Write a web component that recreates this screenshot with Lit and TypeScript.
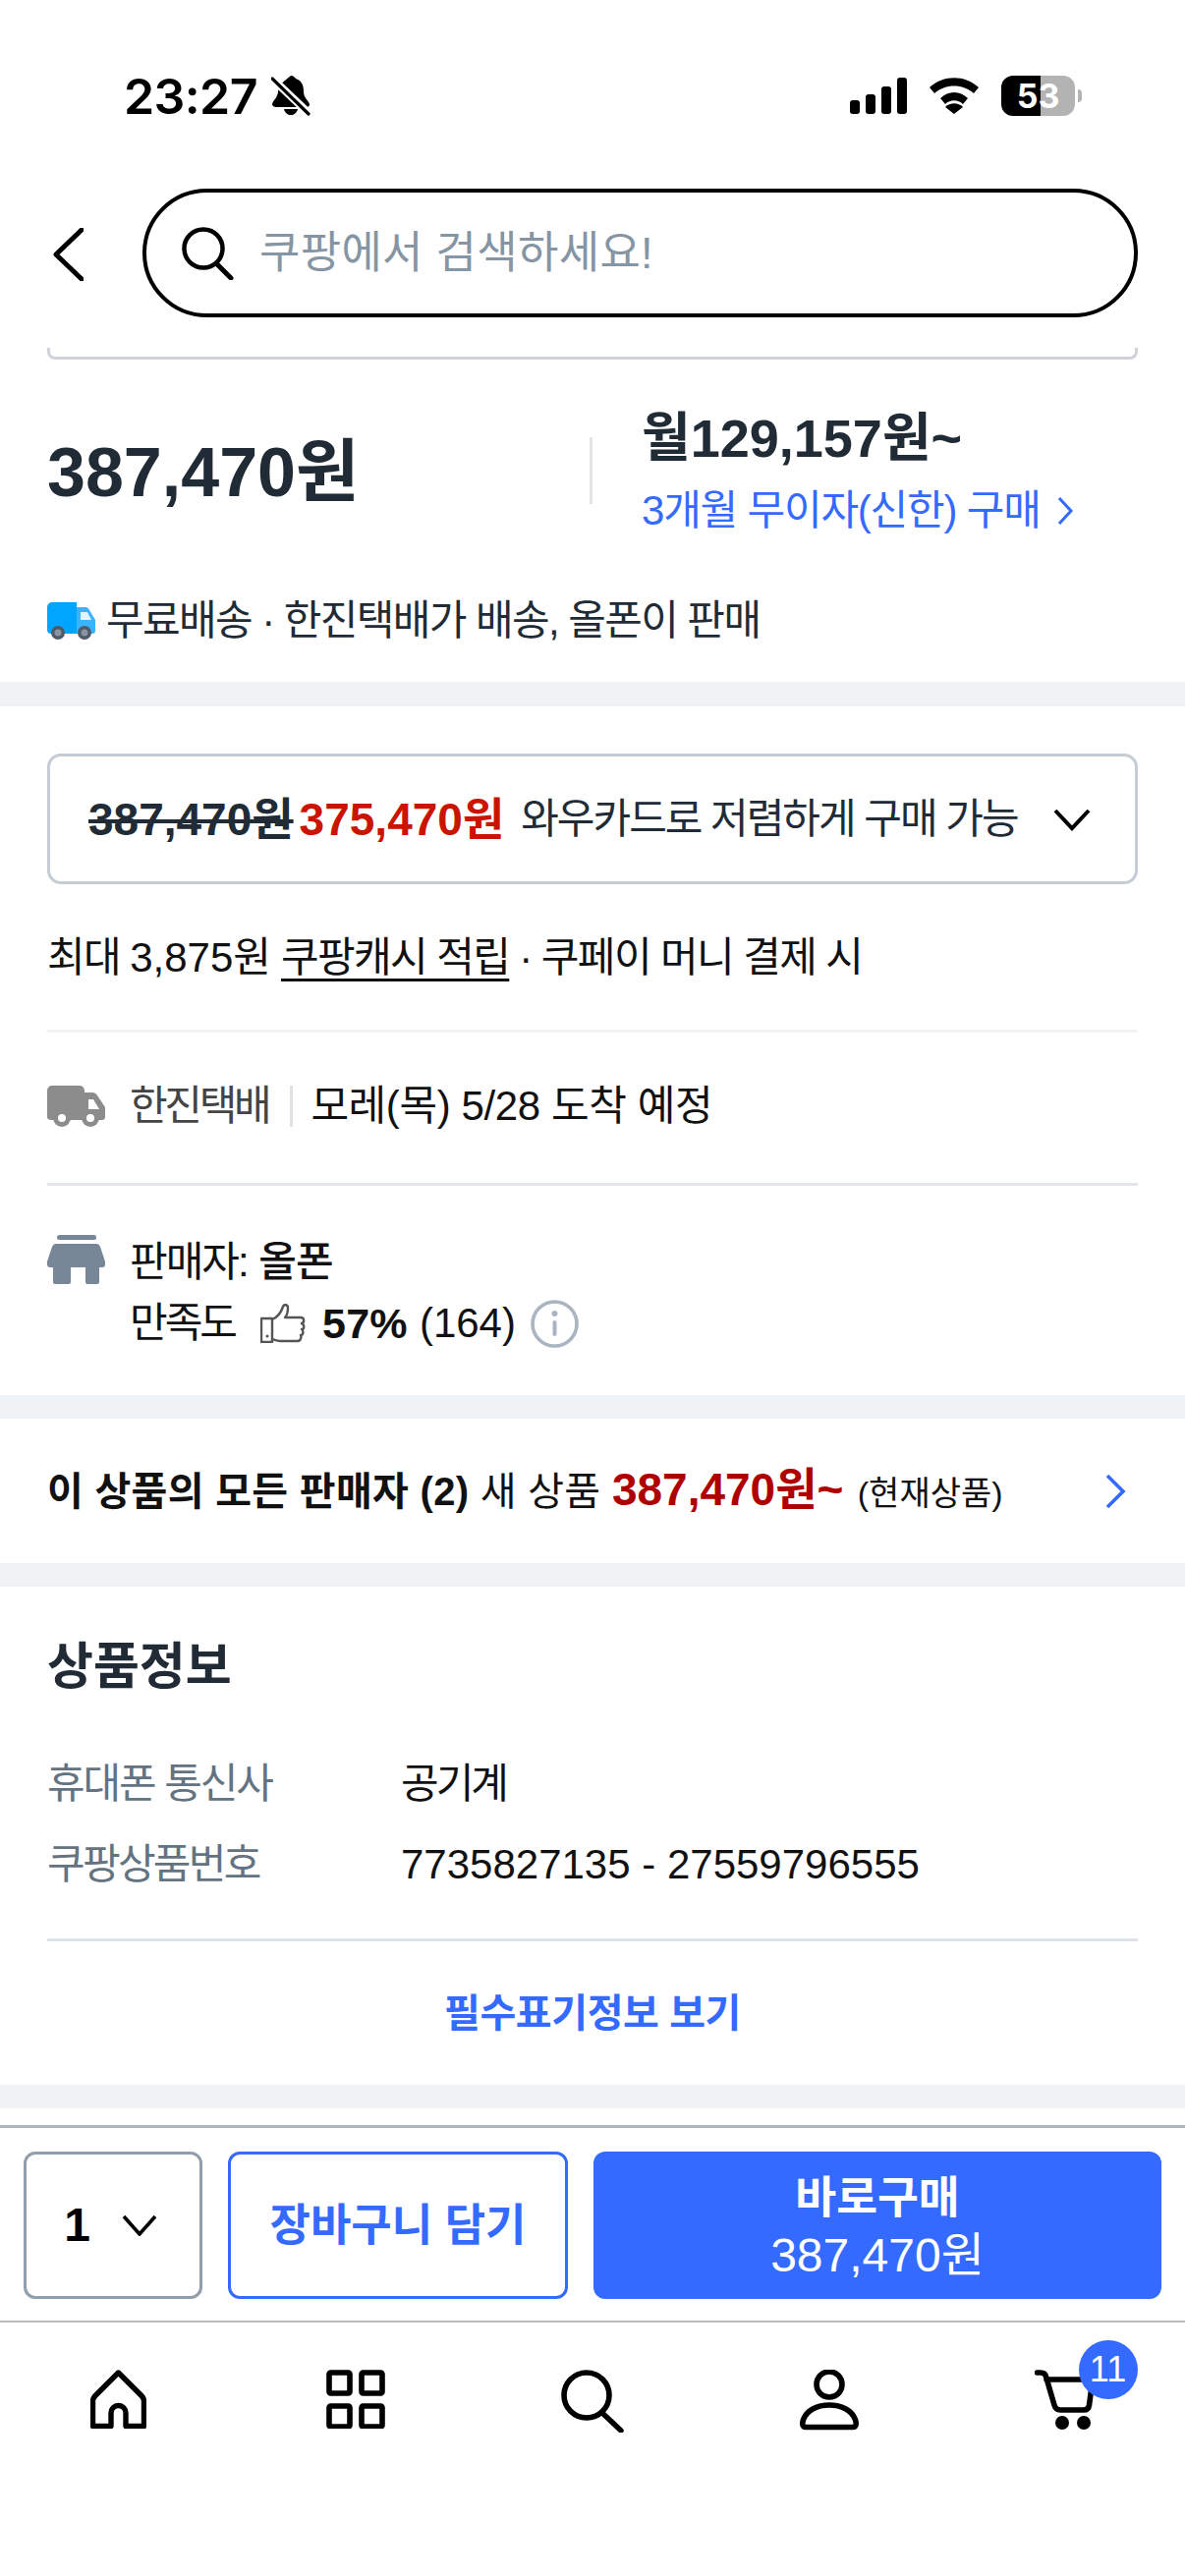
import { LitElement, html, css } from "lit";
import { customElement } from "lit/decorators.js";

@customElement("app-root")
export class AppRoot extends LitElement {
  static styles = css`
    :host {
      display: flex;
      flex-direction: column;
      width: 1206px;
      height: 2622px;
      background: #fff;
      color: #111;
      font-family: "Liberation Sans", "Noto Sans CJK KR", sans-serif;
      font-size: 42px;
      line-height: 56px;
      overflow: hidden;
    }
    svg { display: block; flex: none; }
    .status {
      height: 160px;
      box-sizing: border-box;
      padding: 77px 112px 0 126px;
      display: flex;
      justify-content: space-between;
      align-items: flex-start;
    }
    .status-left { display: flex; align-items: flex-start; gap: 14px; }
    .time {
      font-family: Inter, "Liberation Sans", sans-serif;
      font-weight: 600;
      font-size: 50px;
      line-height: 42px;
      letter-spacing: -0.6px;
      color: #000;
    }
    .status-right { display: flex; align-items: flex-start; gap: 22px; }
    .battery {
      position: relative;
      width: 75px;
      height: 41px;
      border-radius: 12px;
      background: linear-gradient(90deg, #000 53%, #b3b3b3 53%);
      color: #fff;
      font-family: Inter, "Liberation Sans", sans-serif;
      font-weight: 700;
      font-size: 34px;
      line-height: 41px;
      text-align: center;
    }
    .battery::after {
      content: "";
      position: absolute;
      right: -7px;
      top: 14px;
      width: 4px;
      height: 13px;
      border-radius: 0 4px 4px 0;
      background: #b3b3b3;
    }
    .header {
      height: 194px;
      box-sizing: border-box;
      padding: 32px 48px 0 54px;
      display: flex;
      align-items: flex-start;
      gap: 60px;
    }
    .back { margin-top: 40px; }
    .search {
      flex: 1;
      height: 131px;
      box-sizing: border-box;
      border: 4.5px solid #000;
      border-radius: 66px;
      display: flex;
      align-items: center;
      padding-left: 36px;
      gap: 25px;
      font-size: 45px;
      letter-spacing: 0.3px;
      color: #8695a4;
    }
    .card-end {
      height: 12px;
      margin: 0 48px;
      box-sizing: border-box;
      border: 3px solid #cfd3d7;
      border-top: none;
      border-radius: 0 0 8px 8px;
    }
    .price-row {
      margin: 50px 0 0 48px;
      display: flex;
      align-items: center;
    }
    .price-main {
      width: 552px;
      font-size: 70px;
      line-height: 80px;
      font-weight: 700;
      color: #212b36;
      margin-bottom: 2px;
    }
    .vline {
      width: 3px;
      height: 68px;
      background: #e2e4e6;
      margin-bottom: 6px;
    }
    .price-side { margin-left: 50px; }
    .monthly {
      font-size: 54px;
      line-height: 60px;
      font-weight: 700;
      color: #212b36;
    }
    .plan {
      margin-top: 16px;
      display: flex;
      align-items: center;
      gap: 16px;
      color: #346aff;
      letter-spacing: -1.2px;
    }
    .ship {
      margin: 56px 0 0 48px;
      display: flex;
      align-items: center;
      gap: 11px;
      color: #212b36;
      letter-spacing: -1.6px;
    }
    .ship-gap { height: 34px; flex: none; }
    .band { height: 24px; background: #f0f3f6; flex: none; }
    .band.tall { height: 25px; }
    .section-pad { padding: 48px 48px 0; }
    .wow {
      height: 133px;
      box-sizing: border-box;
      border: 3px solid #c4cdd5;
      border-radius: 14px;
      padding: 0 45px 0 39px;
      display: flex;
      align-items: center;
      color: #212b36;
    }
    .strike {
      font-weight: 700;
      font-size: 46px;
      color: #212b36;
      text-decoration: line-through;
      text-decoration-thickness: 4px;
    }
    .red {
      margin-left: 6px;
      font-weight: 700;
      font-size: 46px;
      color: #cb1400;
    }
    .wow-note { margin-left: 17px; flex: 1; letter-spacing: -2px; }
    .cash { margin-top: 47px; letter-spacing: -1.600px; }
    .cash .num { letter-spacing: 0; }
    .cash u {
      text-decoration-thickness: 3px;
      text-underline-offset: 7px;
    }
    .hr-light { border-top: 3px solid #f2f3f4; margin-top: 45px; }
    .hr { border-top: 3px solid #e3e6e9; }
    .delivery {
      display: flex;
      align-items: center;
      padding: 47px 0 50px;
    }
    .carrier { margin-left: 25px; color: #444; letter-spacing: -3.300px; }
    .tiny-line {
      width: 3px;
      height: 42px;
      background: #dfe1e3;
      margin: 0 18px 0 22px;
    }
    .eta { letter-spacing: -0.4px; }
    .seller { padding-top: 47px; padding-bottom: 45px; display: flex; gap: 25px; }
    .seller-lines { display: flex; flex-direction: column; gap: 6px; padding-top: 3px; }
    .seller-line { display: flex; align-items: center; }
    .tight { letter-spacing: -2px; }
    .tighter { letter-spacing: -3px; }
    .medium { font-weight: 500; letter-spacing: -1px; margin-left: 2px; }
    .store { margin-top: 3px; }
    .thumb { margin-left: 26px; }
    .rate { font-weight: 700; margin-left: 15px; font-size: 43px; letter-spacing: 0.3px; }
    .count { margin-left: 12px; }
    .info-i { margin-left: 15px; }
    .sellers {
      height: 147px;
      padding: 0 60px 0 48px;
      display: flex;
      align-items: center;
      font-size: 40px;
    }
    .sellers-text { flex: 1; white-space: nowrap; letter-spacing: 0.300px; }
    .sellers b { font-weight: 700; }
    .dark-red { color: #ae0000; font-weight: 700; font-size: 46px; letter-spacing: 0; }
    .now { font-size: 34px; margin-left: 3px; letter-spacing: 0; }
    .info { padding: 50px 48px 0; }
    .info h2 {
      margin: 0;
      font-size: 51px;
      line-height: 64px;
      font-weight: 700;
      color: #212b36;
    }
    .spec { display: flex; }
    .spec-label { width: 360px; color: #637381; letter-spacing: -2.100px; }
    .spec.second .spec-label { letter-spacing: -2.700px; }
    .spec.first { margin-top: 59px; }
    .spec.second { margin-top: 26px; }
    .carrier-type { letter-spacing: -3px; }
    .info .hr { margin-top: 47px; border-top-color: #dfe3e8; }
    .more {
      height: 146px;
      display: flex;
      align-items: center;
      justify-content: center;
      color: #346aff;
      font-weight: 700;
      font-size: 40px;
      letter-spacing: -0.400px;
    }
    .spacer { flex: 1; }
    .bar {
      border-top: 3px solid #adb5bd;
      padding: 24px 24px 22px 24px;
      display: flex;
      gap: 26px;
    }
    .bar > * {
      height: 150px;
      box-sizing: border-box;
      border-radius: 12px;
      display: flex;
      align-items: center;
      justify-content: center;
    }
    .qty {
      width: 182px;
      border: 3px solid #919eab;
      gap: 32px;
      padding-right: 5px;
      font-size: 48px;
      font-weight: 700;
      color: #000;
    }
    .cart {
      width: 346px;
      border: 3px solid #346aff;
      padding-top: 2px;
      color: #346aff;
      font-size: 45px;
      font-weight: 700;
    }
    .buy {
      flex: 1;
      background: #346aff;
      color: #fff;
      flex-direction: column;
      padding-top: 3px;
      font-size: 48px;
      line-height: 58px;
    }
    .buy b { font-weight: 700; font-size: 45.500px; }
    .nav {
      border-top: 2px solid #bcbcbc;
      height: 260px;
      box-sizing: border-box;
      padding-top: 48px;
      display: grid;
      grid-template-columns: repeat(5, 241px);
      justify-items: center;
      align-items: start;
    }
    .cart-wrap { position: relative; margin-left: -2px; }
    .badge {
      position: absolute;
      left: 45px;
      top: -30px;
      width: 60px;
      height: 60px;
      border-radius: 50%;
      background: #346aff;
      color: #fff;
      font-size: 36px;
      line-height: 60px;
      text-align: center;
    }
    .bell { margin-top: -1px; }
  `;

  render() {
    return html`
      <div class="status">
        <div class="status-left">
          <span class="time">23:27</span>
          <svg class="bell" width="40" height="42" viewBox="0 0 40 42">
            <path d="M20 1c3 0 4 2 5 3 6 2 8 7 8 13 0 7 5 9 6 13 0 2-1 3-3 3H5c-2 0-4-1-4-3 1-4 5-6 6-12 0-3 1-6 2-8z" fill="#000"/>
            <path d="M13 35h14c-1 4-4 6-7 6s-6-2-7-6z" fill="#000"/>
            <path d="M-1 2L40 41" stroke="#fff" stroke-width="8"/>
            <path d="M1 4L38 40" stroke="#000" stroke-width="3.2" stroke-linecap="round"/>
          </svg>
        </div>
        <div class="status-right">
          <svg width="58" height="40" viewBox="0 0 58 40">
            <rect x="0" y="25" width="10" height="14" rx="3"/>
            <rect x="16" y="19" width="10" height="20" rx="3"/>
            <rect x="32" y="11" width="10" height="28" rx="3"/>
            <rect x="48" y="2" width="10" height="37" rx="3"/>
          </svg>
          <svg width="52" height="40" viewBox="0 0 52 40">
            <path d="M1 12C15 -1 37 -1 51 12l-5 6C35 8 17 8 6 18z"/>
            <path d="M12 23c8-8 20-8 28 0l-5 6c-5-5-13-5-18 0z"/>
            <path d="M26 39l-9-7c5-5 13-5 18 0z"/>
          </svg>
          <div class="battery">53</div>
        </div>
      </div>

      <div class="header">
        <svg class="back" width="31" height="54" viewBox="0 0 31 54">
          <path d="M29 2L3 27l26 25" fill="none" stroke="#000" stroke-width="5" stroke-linecap="round" stroke-linejoin="round"/>
        </svg>
        <div class="search">
          <svg width="54" height="54" viewBox="0 0 54 54">
            <circle cx="22" cy="22" r="19.5" fill="none" stroke="#000" stroke-width="4.5"/>
            <path d="M35 37l15 15" stroke="#000" stroke-width="5" stroke-linecap="round"/>
          </svg>
          <span>쿠팡에서 검색하세요!</span>
        </div>
      </div>
      <div class="card-end"></div>

      <div class="price-row">
        <div class="price-main">387,470원</div>
        <div class="vline"></div>
        <div class="price-side">
          <div class="monthly">월129,157원~</div>
          <div class="plan">
            <span>3개월 무이자(신한) 구매</span>
            <svg width="18" height="30" viewBox="0 0 18 30">
              <path d="M3 2l12 13L3 28" fill="none" stroke="#346aff" stroke-width="3"/>
            </svg>
          </div>
        </div>
      </div>

      <div class="ship">
        <svg width="49" height="38" viewBox="0 0 49 38">
          <path d="M0 5a5 5 0 0 1 5-5h25v32H4a4 4 0 0 1-4-4z" fill="#00a5ff"/>
          <path d="M30 5h9c2 0 3 1 4 3l6 10v11c0 2-1 3-3 3H30z" fill="#39b5ff"/>
          <path d="M34 10h7l4 8H34z" fill="#e3f4ff"/>
          <circle cx="11" cy="31" r="7" fill="#4f5a68"/><circle cx="11" cy="31" r="3.5" fill="#8794a3"/>
          <circle cx="38" cy="31" r="7" fill="#4f5a68"/><circle cx="38" cy="31" r="3.5" fill="#8794a3"/>
        </svg>
        <span>무료배송 · 한진택배가 배송, 올폰이 판매</span>
      </div>
      <div class="ship-gap"></div>
      <div class="band tall"></div>

      <div class="section-pad">
        <div class="wow">
          <span class="strike">387,470원</span>
          <span class="red">375,470원</span>
          <span class="wow-note">와우카드로 저렴하게 구매 가능</span>
          <svg width="38" height="24" viewBox="0 0 38 24">
            <path d="M2 3l17 18L36 3" fill="none" stroke="#000" stroke-width="4"/>
          </svg>
        </div>
        <div class="cash">최대 <span class="num">3,875원</span> <u>쿠팡캐시 적립</u> · 쿠페이 머니 결제 시</div>
        <div class="hr-light"></div>
        <div class="delivery">
          <svg width="59" height="42" viewBox="0 0 59 42">
            <path d="M0 5a5 5 0 0 1 5-5h28a5 5 0 0 1 5 5v2h8c2 0 4 1 5 3l8 12v10c0 2-1 3-3 3H4c-2 0-4-1-4-3z" fill="#8c8c8c"/>
            <path d="M42 14h5l6 10H42z" fill="#fff"/>
            <circle cx="15" cy="33" r="9" fill="#8c8c8c"/><circle cx="15" cy="33" r="4" fill="#fff"/>
            <circle cx="44" cy="33" r="9" fill="#8c8c8c"/><circle cx="44" cy="33" r="4" fill="#fff"/>
          </svg>
          <span class="carrier">한진택배</span>
          <div class="tiny-line"></div>
          <span class="eta">모레(목) 5/28 도착 예정</span>
        </div>
        <div class="hr"></div>
        <div class="seller">
          <svg class="store" width="59" height="50" viewBox="0 0 59 50">
            <rect x="10" y="0" width="40" height="5" rx="2.5" fill="#788797"/>
            <path d="M9 9h41c2 0 3 1 4 3l5 15v3c0 2-1 3-3 3H3c-2 0-3-1-3-3v-3l5-15c1-2 2-3 4-3z" fill="#788797"/>
            <path d="M6 33h18v15a2 2 0 0 1-2 2H8a2 2 0 0 1-2-2z" fill="#788797"/>
            <path d="M39 33h14v15a2 2 0 0 1-2 2H41a2 2 0 0 1-2-2z" fill="#788797"/>
          </svg>
          <div class="seller-lines">
            <div class="seller-line"><span class="tight">판매자:&nbsp;</span><span class="medium">올폰</span></div>
            <div class="seller-line">
              <span class="tighter">만족도</span>
              <svg class="thumb" width="48" height="40" viewBox="0 0 48 40">
                <path d="M1 15h11v24H1z M12 16c5-2 9-7 11-13 1-3 5-2 5 1 0 4-1 8-3 10h16c4 0 4 5 1 6 3 1 3 6 0 6 2 1 2 6-1 6 1 2 0 6-3 6H20c-3 0-5-1-8-2" fill="none" stroke="#555" stroke-width="2.4" stroke-linejoin="round"/>
                <circle cx="7" cy="33" r="1.5" fill="#555"/>
              </svg>
              <span class="rate">57%</span>
              <span class="count">(164)</span>
              <svg class="info-i" width="49" height="49" viewBox="0 0 49 49">
                <circle cx="24.5" cy="24.5" r="22.5" fill="none" stroke="#aab5c2" stroke-width="3.6"/>
                <circle cx="24.5" cy="14" r="3" fill="#aab5c2"/>
                <rect x="22.5" y="21" width="4" height="16" rx="2" fill="#aab5c2"/>
              </svg>
            </div>
          </div>
        </div>
      </div>
      <div class="band"></div>

      <div class="sellers">
        <div class="sellers-text"><b>이 상품의 모든 판매자 (2)</b> 새 상품 <span class="dark-red">387,470원~</span> <span class="now">(현재상품)</span></div>
        <svg width="21" height="36" viewBox="0 0 21 36">
          <path d="M2 2l16 16L2 34" fill="none" stroke="#346aff" stroke-width="3.6"/>
        </svg>
      </div>
      <div class="band"></div>

      <div class="info">
        <h2>상품정보</h2>
        <div class="spec first"><span class="spec-label">휴대폰 통신사</span><span class="carrier-type">공기계</span></div>
        <div class="spec second"><span class="spec-label">쿠팡상품번호</span><span>7735827135 - 27559796555</span></div>
        <div class="hr"></div>
        <div class="more">필수표기정보 보기</div>
      </div>
      <div class="band"></div>
      <div class="spacer"></div>

      <div class="bar">
        <div class="qty">
          <span>1</span>
          <svg width="36" height="22" viewBox="0 0 36 22">
            <path d="M2 2l16 18L34 2" fill="none" stroke="#000" stroke-width="3.6"/>
          </svg>
        </div>
        <div class="cart">장바구니 담기</div>
        <div class="buy"><b>바로구매</b><span>387,470원</span></div>
      </div>

      <div class="nav">
        <svg width="57" height="60" viewBox="0 0 57 60">
          <path d="M28.500 3L52 26.500q2.500 2.500 2.500 5V57.500H36V44a7.500 7.500 0 0 0-15 0V57.500H2.500V31.500q0-2.500 2.500-5z" fill="none" stroke="#000" stroke-width="5.400" stroke-linejoin="round"/>
        </svg>
        <svg width="60" height="60" viewBox="0 0 60 60">
          <rect x="3" y="3" width="21" height="21" rx="1.500" fill="none" stroke="#000" stroke-width="5.600"/>
          <rect x="36" y="3" width="21" height="21" rx="1.500" fill="none" stroke="#000" stroke-width="5.600"/>
          <rect x="3" y="37" width="21" height="21" rx="1.500" fill="none" stroke="#000" stroke-width="5.600"/>
          <rect x="36" y="37" width="21" height="21" rx="1.500" fill="none" stroke="#000" stroke-width="5.600"/>
        </svg>
        <svg width="64" height="64" viewBox="0 0 64 64">
          <circle cx="26" cy="26" r="23" fill="none" stroke="#000" stroke-width="5.600"/>
          <path d="M43 45l18 17" stroke="#000" stroke-width="5.400" stroke-linecap="round"/>
        </svg>
        <svg width="60" height="62" viewBox="0 0 60 62">
          <ellipse cx="30" cy="15" rx="13" ry="13" fill="none" stroke="#000" stroke-width="5.600"/>
          <path d="M6 58.500C2 58.500 2.500 54 3.500 51 7 41 18 36 30 36s23 5 26.500 15c1 3 1.500 7.500-2.500 7.500z" fill="none" stroke="#000" stroke-width="5.600" stroke-linejoin="round"/>
        </svg>
        <div class="cart-wrap">
          <svg width="62" height="62" viewBox="0 0 62 62">
            <path d="M2.500 3H6c3 0 5 1.500 5.500 4L20 36c1 3.500 3 5 6 5h24c3 0 5-1.500 5.500-5L59 10H12" fill="none" stroke="#000" stroke-width="5.600" stroke-linecap="round" stroke-linejoin="round"/>
            <circle cx="28" cy="54" r="7" fill="#000"/>
            <circle cx="50" cy="54" r="7" fill="#000"/>
          </svg>
          <div class="badge">11</div>
        </div>
      </div>
    `;
  }
}
